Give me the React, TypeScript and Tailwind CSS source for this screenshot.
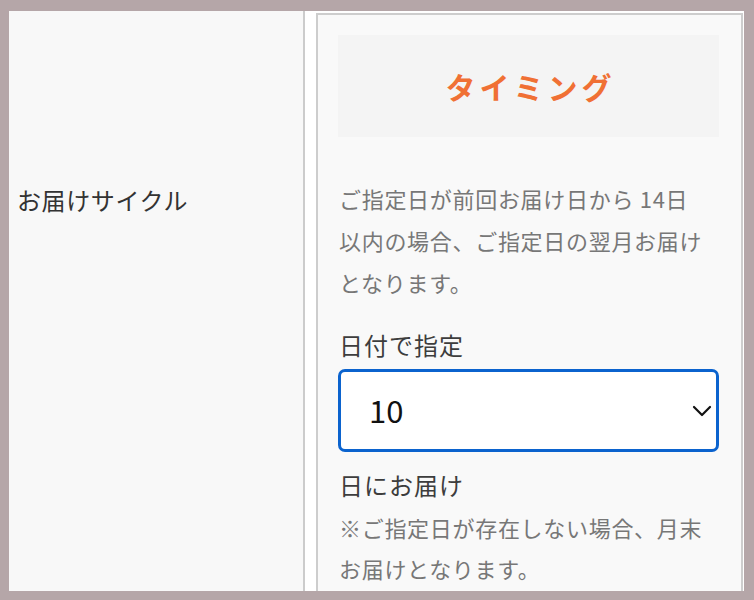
import React from 'react';

const jp = { fontFamily: '"Noto Sans CJK JP", "Noto Sans", sans-serif' };

function Chevron() {
  return (
    <svg width="20" height="12" viewBox="0 0 20 12" fill="none">
      <path d="M2 2 L10 10 L18 2" stroke="#111" strokeWidth="2.2" strokeLinecap="round" strokeLinejoin="round" />
    </svg>
  );
}

export default function App() {
  return (
    <div className="h-[600px] w-[754px] bg-[#b5a6a8] pt-[11px] pb-[9px] pl-[9px] pr-[10px]" style={jp}>
      <div className="flex h-full overflow-hidden bg-white">
        {/* row label */}
        <div className="w-[296px] shrink-0 border-r-2 border-[#cccccc] bg-[#f8f8f8] pl-[8px] pt-[171px]">
          <p className="text-[24px] leading-[36px] tracking-[0.6px] text-[#333333]">お届けサイクル</p>
        </div>

        {/* row value */}
        <div className="flex-1 pl-[11px] pt-[2px] pr-[1px]">
          <div className="min-h-[700px] border-2 border-[#cdcdcd] bg-[#f9f9f9] pl-[20px] pr-[22px] pt-[20px]">
            <div className="flex h-[102px] items-center justify-center bg-[#f4f4f4]">
              <h2 className="pl-[4px] text-[30px] font-bold tracking-[4px] text-[#f07034]">タイミング</h2>
            </div>

            <p className="mt-[40px] pl-[1px] text-[22px] leading-[42px] tracking-[0.7px] text-[#777777]">
              ご指定日が前回お届け日から 14日
              <br />
              以内の場合、ご指定日の翌月お届け
              <br />
              となります。
            </p>

            <p className="mt-[24px] pl-[1px] text-[24px] leading-[36px] tracking-[1px] text-[#3d3d3d]">日付で指定</p>

            <div className="mt-[6px] flex h-[83px] items-center justify-between rounded-[7px] border-[3px] border-[#0b63ce] bg-white pl-[28px] pr-[4px]">
              <span className="text-[31px] text-[#111111]">10</span>
              <Chevron />
            </div>

            <p className="mt-[15px] pl-[1px] text-[24px] leading-[36px] tracking-[1px] text-[#3d3d3d]">日にお届け</p>

            <p className="mt-[4px] pl-[1px] text-[22px] leading-[41px] tracking-[0.7px] text-[#777777]">
              ※ご指定日が存在しない場合、月末
              <br />
              お届けとなります。
            </p>
          </div>
        </div>
      </div>
    </div>
  );
}
